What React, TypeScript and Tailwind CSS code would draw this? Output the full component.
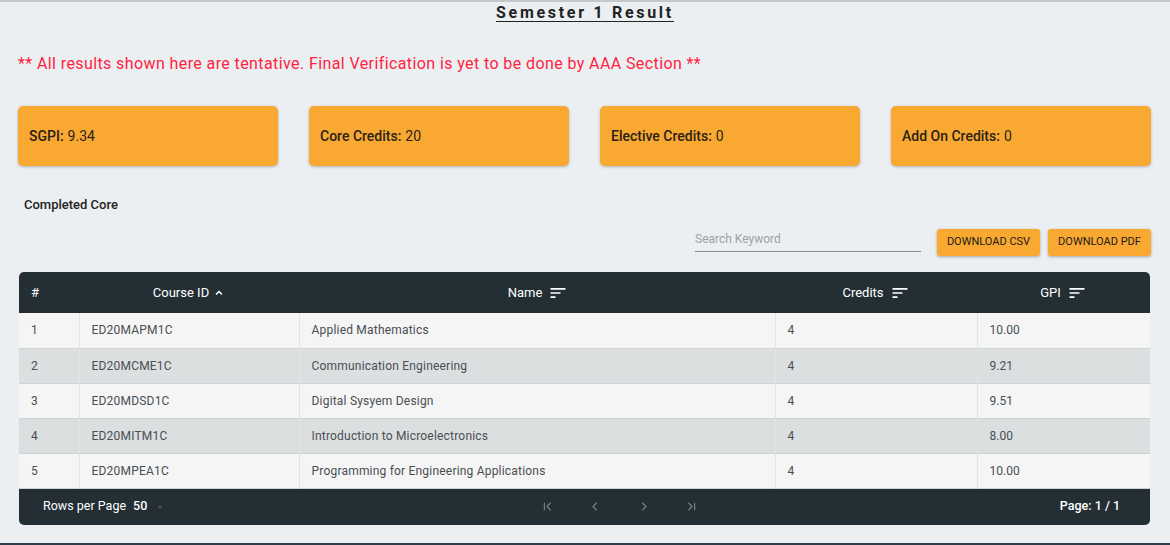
import React from 'react';

const rows = [
  { id: 'ED20MAPM1C', name: 'Applied Mathematics', credits: 4, gpi: '10.00' },
  { id: 'ED20MCME1C', name: 'Communication Engineering', credits: 4, gpi: '9.21' },
  { id: 'ED20MDSD1C', name: 'Digital Sysyem Design', credits: 4, gpi: '9.51' },
  { id: 'ED20MITM1C', name: 'Introduction to Microelectronics', credits: 4, gpi: '8.00' },
  { id: 'ED20MPEA1C', name: 'Programming for Engineering Applications', credits: 4, gpi: '10.00' },
];

const cards = [
  { label: 'SGPI:', value: '9.34' },
  { label: 'Core Credits:', value: '20' },
  { label: 'Elective Credits:', value: '0' },
  { label: 'Add On Credits:', value: '0' },
];

const SortIcon = () => (
  <svg width="20" height="20" viewBox="0 0 24 24" fill="currentColor">
    <path d="M3 18h6v-2H3v2zM3 6v2h18V6H3zm0 7h12v-2H3v2z" />
  </svg>
);

const Chevron = ({ d }: { d: string }) => (
  <svg width="15" height="15" viewBox="0 0 24 24" fill="none" stroke="currentColor" strokeWidth="1.8">
    <path d={d} />
  </svg>
);

export default function App() {
  return (
    <div className="w-[1170px] h-[545px] bg-[#ebeff2] border-t-2 border-t-[#c3c8cc] border-b-2 border-b-[#2e3f4b] overflow-hidden" style={{ fontFamily: 'Roboto, "Liberation Sans", sans-serif' }}>
      {/* Title */}
      <div className="flex justify-center pt-[1px]">
        <h1 className="text-[16px] font-bold text-[#222] underline underline-offset-[3px] tracking-[2.7px] leading-[20px]">
          Semester 1 Result
        </h1>
      </div>

      <p className="mt-[31px] ml-[18px] text-[16px] text-[#ff2340] leading-[20px] tracking-[0.4px]">
        ** All results shown here are tentative. Final Verification is yet to be done by AAA Section **
      </p>

      {/* Summary cards */}
      <div className="mt-[32px] ml-[18px] mr-[19px] grid grid-cols-4 gap-[31px]">
        {cards.map((c) => (
          <div key={c.label} className="h-[60px] bg-[#f9a932] rounded-[5px] shadow-[0_1px_3px_rgba(0,0,0,0.25)] flex items-center px-[11px] text-[14px] text-[#2a2216]">
            <span className="font-medium">{c.label}</span>
            <span className="ml-[4px]">{c.value}</span>
          </div>
        ))}
      </div>

      <p className="mt-[31px] ml-[24px] text-[13px] font-medium text-[#222] leading-[16px]">Completed Core</p>

      {/* Toolbar */}
      <div className="mt-[16px] mr-[19px] flex justify-end items-start gap-[8px]">
        <div className="w-[226px] h-[23px] border-b border-[#8a8d90] flex items-end pb-[5px] mr-[8px]">
          <span className="text-[12px] text-[#9da1a4] leading-[14px]">Search Keyword</span>
        </div>
        <button className="w-[103px] h-[27px] bg-[#f9a932] rounded-[3px] shadow-[0_1px_3px_rgba(0,0,0,0.3)] text-[11px] text-[#1d1a14]">
          DOWNLOAD CSV
        </button>
        <button className="w-[103px] h-[27px] bg-[#f9a932] rounded-[3px] shadow-[0_1px_3px_rgba(0,0,0,0.3)] text-[11px] text-[#1d1a14]">
          DOWNLOAD PDF
        </button>
      </div>

      {/* Table */}
      <div className="mt-[16px] ml-[19px] w-[1131px] rounded-[5px] overflow-hidden">
        <table className="w-full border-collapse text-[12px]">
          <thead>
            <tr className="h-[41px] bg-[#242e35] text-white text-[13px]">
              <th className="w-[60px] text-left pl-[12px] font-normal">#</th>
              <th className="w-[220px] font-normal">
                <span className="inline-flex items-center gap-[4px]">
                  Course ID
                  <svg width="12" height="12" viewBox="0 0 24 24" fill="none" stroke="currentColor" strokeWidth="3">
                    <path d="M6 15l6-6 6 6" />
                  </svg>
                </span>
              </th>
              <th className="w-[476px] font-normal">
                <span className="inline-flex items-center gap-[6px] pl-[2px]">
                  Name <SortIcon />
                </span>
              </th>
              <th className="w-[202px] font-normal">
                <span className="inline-flex items-center gap-[6px]">
                  Credits <SortIcon />
                </span>
              </th>
              <th className="font-normal">
                <span className="inline-flex items-center gap-[6px]">
                  GPI <SortIcon />
                </span>
              </th>
            </tr>
          </thead>
          <tbody className="text-[#484e53]">
            {rows.map((r, i) => (
              <tr key={r.id} className={`h-[35px] ${i % 2 === 0 ? 'bg-[#f5f5f5]' : 'bg-[#dcdfe0]'} border-b border-[#d0d3d5]`}>
                <td className="pl-[12px] border-r border-[#e0e2e3]">{i + 1}</td>
                <td className="pl-[12px] border-r border-[#e0e2e3] tracking-[0.2px]">{r.id}</td>
                <td className="pl-[12px] border-r border-[#e0e2e3] tracking-[0.2px]">{r.name}</td>
                <td className="pl-[12px] border-r border-[#e0e2e3]">{r.credits}</td>
                <td className="pl-[12px]">{r.gpi}</td>
              </tr>
            ))}
          </tbody>
        </table>
        <div className="h-[36px] bg-[#242e35] flex items-center text-white text-[12.5px]">
          <div className="w-[500px] pl-[24px] flex items-center">
            <span>Rows per Page</span>
            <span className="ml-[7px] font-medium">50</span>
            <svg className="ml-[8px]" width="10" height="10" viewBox="0 0 10 10" fill="#4a555d">
              <path d="M2 4h6L5 7z" />
            </svg>
          </div>
          <div className="flex items-center gap-[33px] text-[#7a858c] ml-[21px]">
            <Chevron d="M7 6v12M17 6l-6 6 6 6" />
            <Chevron d="M14 6l-6 6 6 6" />
            <Chevron d="M10 6l6 6-6 6" />
            <Chevron d="M7 6l6 6-6 6M17 6v12" />
          </div>
          <div className="ml-auto pr-[30px] font-medium">Page: 1 / 1</div>
        </div>
      </div>
    </div>
  );
}
